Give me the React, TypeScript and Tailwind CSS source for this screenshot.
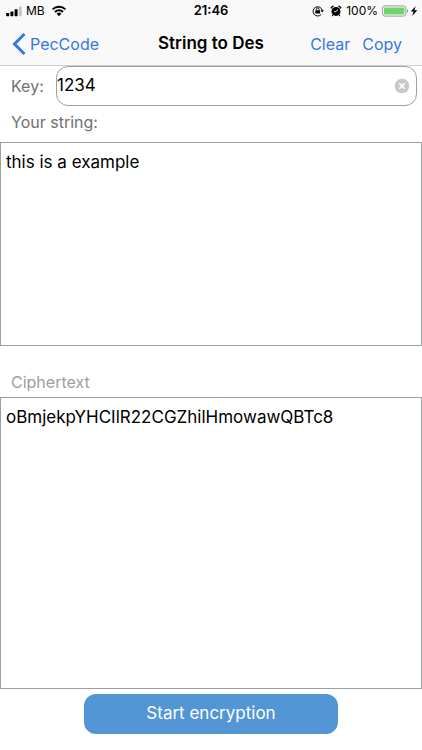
import { useState } from "react";

function SignalIcon() {
  return (
    <svg className="h-3 w-4" viewBox="0 0 16 12" aria-hidden="true">
      <rect x="0.2" y="8" width="3" height="3.2" rx="0.6" fill="#000" />
      <rect x="4.4" y="6.6" width="3" height="4.6" rx="0.6" fill="#000" />
      <rect x="8.6" y="4.2" width="3" height="7" rx="0.6" fill="#000" />
      <rect x="12.9" y="1.4" width="2.9" height="9.8" rx="0.6" fill="#c4c4c6" />
    </svg>
  );
}

function WifiIcon() {
  return (
    <svg className="h-3 w-4" viewBox="0 0 16 12" fill="none" stroke="#000" strokeWidth="2" aria-hidden="true">
      <path d="M1.6 4.4a9.2 9.2 0 0 1 12.8 0" />
      <path d="M4 7a5.7 5.7 0 0 1 8 0" />
      <path d="M8 11.2 5.6 8.8a3.4 3.4 0 0 1 4.8 0Z" fill="#000" stroke="none" />
    </svg>
  );
}

function RotationLockIcon() {
  return (
    <svg className="h-3 w-3" viewBox="0 0 12 12" fill="none" stroke="#000" aria-hidden="true">
      <path d="M9.2 9.4A4.6 4.6 0 1 1 10.2 5.4" strokeWidth="1" />
      <path d="M8.5 5.2H12l-1.8 2.4Z" fill="#000" stroke="none" />
      <rect x="3.3" y="5.2" width="4.8" height="3.4" rx="0.4" fill="#000" stroke="none" />
      <path d="M4.4 5.4V4.3a1.3 1.3 0 0 1 2.6 0v1.1" strokeWidth="0.9" />
    </svg>
  );
}

function AlarmIcon() {
  return (
    <svg className="h-3 w-3" viewBox="0 0 12 12" fill="none" stroke="#000" aria-hidden="true">
      <circle cx="6" cy="6.4" r="4.5" fill="#000" stroke="none" />
      <path d="M1 3.4A2 2 0 0 1 3.7 1.2ZM11 3.4A2 2 0 0 0 8.3 1.2Z" fill="#000" strokeWidth="0.6" strokeLinejoin="round" />
      <path d="m2.9 9.8-.5.9M9.1 9.8l.5.9" strokeWidth="1.1" strokeLinecap="round" />
      <path d="M7.6 4.4 6.1 6.7H4" stroke="#f9f9f9" strokeWidth="0.9" />
    </svg>
  );
}

function BatteryIcon() {
  return (
    <svg className="h-3 w-7" viewBox="0 0 28 12" aria-hidden="true">
      <rect x="0.5" y="0.9" width="23.4" height="10.2" rx="2.4" fill="none" stroke="#8e8e90" strokeWidth="0.9" />
      <rect x="2" y="2.4" width="20.4" height="7.2" rx="1" fill="#70d56d" />
      <path d="M25 4.2c1.5.5 1.5 3.1 0 3.6Z" fill="#8e8e90" />
    </svg>
  );
}

function BoltIcon() {
  return (
    <svg className="h-3 w-2" viewBox="0 0 8 12" aria-hidden="true">
      <path d="M5.6 1.2.8 6.6h2.7l-1.2 4.4 5-5.8H4.5Z" fill="#000" />
    </svg>
  );
}

function StatusBar() {
  return (
    <div className="grid h-[22px] grid-cols-[1fr_auto_1fr] items-center px-1 text-xs text-black">
      <div className="flex items-center gap-1 pl-0.5">
        <SignalIcon />
        <span>MB</span>
        <span className="pl-0.5">
          <WifiIcon />
        </span>
      </div>
      <span className="text-[13px] font-semibold">21:46</span>
      <div className="flex items-center justify-end">
        <RotationLockIcon />
        <span className="pr-1 pl-1.5">
          <AlarmIcon />
        </span>
        <span className="pr-1">100%</span>
        <BatteryIcon />
        <BoltIcon />
      </div>
    </div>
  );
}

export default function App() {
  const [key, setKey] = useState("1234");
  const [text, setText] = useState("this is a example");
  const [cipher, setCipher] = useState("oBmjekpYHCIlR22CGZhilHmowawQBTc8");

  const clear = () => {
    setText("");
    setCipher("");
  };

  return (
    <div className="flex min-h-screen flex-col bg-white font-['Inter','Liberation_Sans',sans-serif] text-black">
      <header className="border-b border-[#cfcfd1] bg-[#f9f9f9]">
        <StatusBar />
        <nav className="grid h-[43px] grid-cols-[1fr_auto_1fr] items-center px-3 text-base text-[#3478e5]">
          <a href="#" className="flex items-center gap-1">
            <svg className="h-6 w-3.5" viewBox="0 0 14 24" fill="none" stroke="currentColor" strokeWidth="3" aria-hidden="true">
              <path d="M12.5 2 2.5 12l10 10" />
            </svg>
            PecCode
          </a>
          <h1 className="text-[17px] font-semibold text-black">String to Des</h1>
          <div className="flex justify-end gap-3 pr-2">
            <button type="button" onClick={clear}>Clear</button>
            <button type="button" onClick={() => navigator.clipboard?.writeText(cipher)}>Copy</button>
          </div>
        </nav>
      </header>

      <main className="flex flex-1 flex-col">
        <div className="flex items-center pr-[5px] pl-[11px]">
          <label htmlFor="key" className="w-[45px] shrink-0 text-base text-[#707070]">Key:</label>
          <div className="flex h-10 min-w-0 flex-1 items-center rounded-xl border border-[#9aa0a2] pr-1.5">
            <input
              id="key"
              value={key}
              onChange={(e) => setKey(e.target.value)}
              className="min-w-0 flex-1 text-[17px] outline-none"
            />
            <button type="button" aria-label="Clear key" onClick={() => setKey("")}>
              <svg className="h-4 w-4" viewBox="0 0 16 16" aria-hidden="true">
                <circle cx="8" cy="8" r="7.3" fill="#c8c8c8" />
                <path d="m5.3 5.3 5.4 5.4m0-5.4-5.4 5.4" stroke="#fff" strokeWidth="1.6" />
              </svg>
            </button>
          </div>
        </div>

        <label htmlFor="plain" className="flex h-9 items-end px-[11px] pb-2 text-base text-[#707070]">
          Your string:
        </label>
        <textarea
          id="plain"
          value={text}
          onChange={(e) => setText(e.target.value)}
          className="h-[204px] w-full resize-none border border-[#9aa0a2] px-[5px] py-[7px] text-[17px] leading-6 outline-none"
        />

        <label htmlFor="cipher" className="flex h-[51px] items-end px-[11px] pb-[3px] text-base text-[#9aa0a2]">
          Ciphertext
        </label>
        <textarea
          id="cipher"
          value={cipher}
          readOnly
          spellCheck={false}
          className="min-h-40 w-full flex-1 resize-none border border-[#9aa0a2] px-[5px] py-[7px] text-[17px] leading-6 outline-none"
        />
      </main>

      <footer className="px-[84px] pt-[5px] pb-4">
        <button type="button" className="h-10 w-full rounded-xl bg-[#5296d5] text-[17px] text-white">
          Start encryption
        </button>
      </footer>
    </div>
  );
}
